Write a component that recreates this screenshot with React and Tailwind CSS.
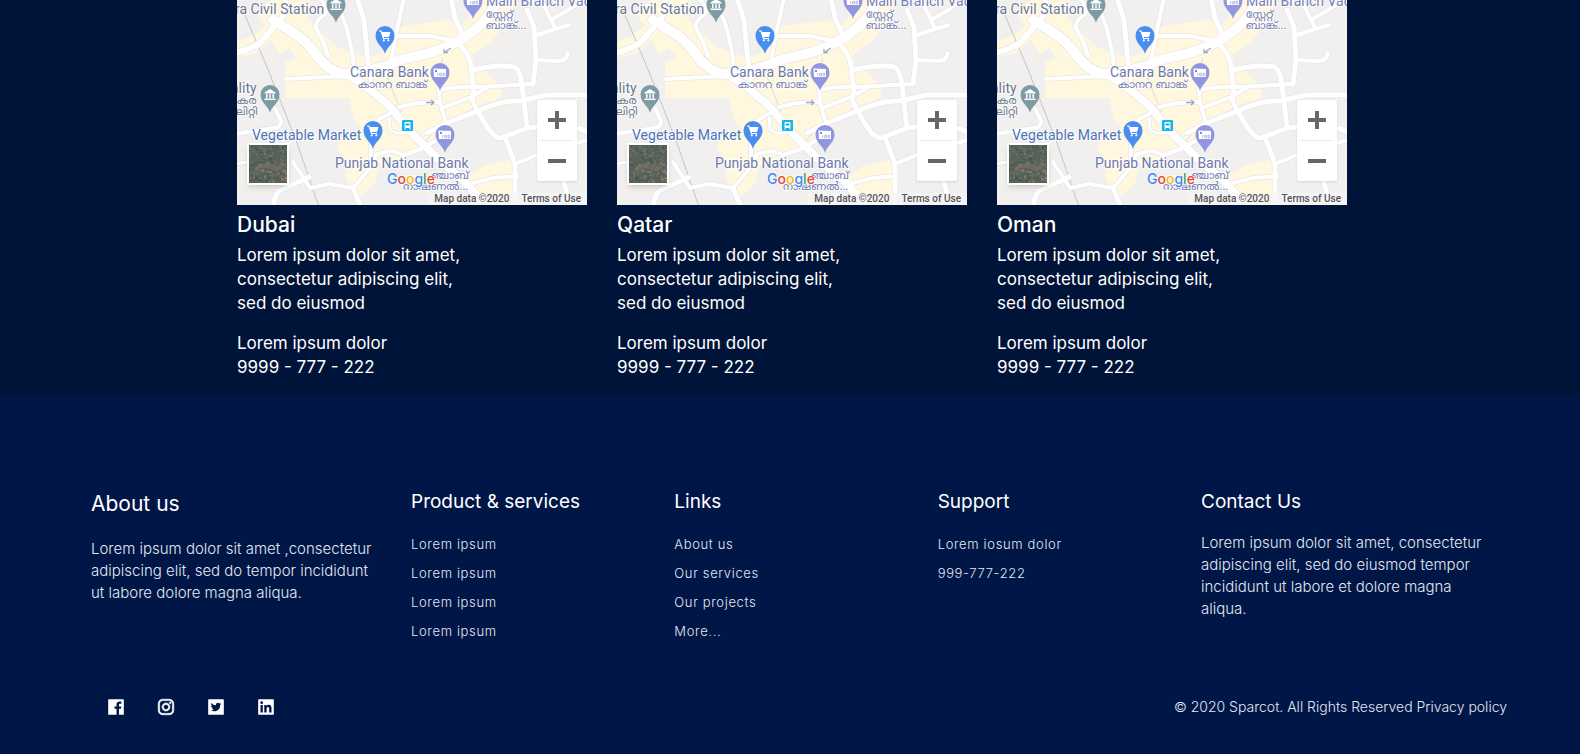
import React from "react";
import {
  AiFillFacebook,
  AiOutlineInstagram,
  AiFillTwitterSquare,
  AiFillLinkedin,
} from "react-icons/ai";

const ROADS = [
  ["M36 28 L23 43 Q12 50 -2 53", 6],
  ["M42 22 Q50 12 48 -2", 6],
  ["M49 79 L110 76", 4],
  ["M82 -2 Q92 8 88 14 Q77 22 79 28 L87 44 L91 56", 4],
  ["M97 -2 Q107 18 111 33 L115 52 L118 76", 4],
  ["M120 -2 L127 20 L131 62 L134 80", 5],
  ["M167 -2 L160 30 L153 66", 4],
  ["M157 36 L193 36 L223 42", 4],
  ["M214 -2 L218 18 L225 34", 5],
  ["M224 46 Q232 54 234 66 L237 92 Q233 98 238 106 L247 122 Q256 138 264 138 L290 128 Q320 124 344 129 L354 134", 5],
  ["M236 70 Q260 64 278 67 Q284 72 285 86 L290 127", 5],
  ["M290 10 L297 27 L299 60 L296 84", 5],
  ["M300 60 L322 61 Q329 61 331 53", 4],
  ["M300 35 L318 29 L332 25", 4],
  ["M318 28 L311 14 L305 2", 4],
  ["M314 20 L328 12 L350 -2", 4],
  ["M203 90 Q220 86 240 87 L296 84", 4],
  ["M205 108 L234 97 L250 88", 4],
  ["M190 133 L210 123 L243 110 Q266 100 282 101 L310 95 L352 95", 5],
  ["M162 107 L180 103 L203 102", 4],
  ["M202 88 L203 103 L208 120", 4],
  ["M156 112 Q142 118 134 126 L134 158", 4],
  ["M152 118 L153 130 Q164 137 174 129", 3],
  ["M268 137 L278 164 L278 207", 5],
  ["M280 163 L300 155 L354 139", 4],
  ["M326 178 L333 207", 5],
  ["M232 184 L256 178 L280 176", 4],
  ["M200 140 L184 149 L166 155 L156 151 L140 154 Q136 162 130 172 L116 188 L92 184 L73 188 L56 162", 4],
  ["M116 188 L124 207", 5],
  ["M72 177 L42 191 Q36 198 37 207", 5],
  ["M38 108 L44 121 Q44 127 38 128 L-2 134", 4],
  ["M-2 164 L10 162", 3],
];

const MAIN = [
  ["M36 20 L60 35 Q70 42 81 57 Q90 70 106 74 Q138 72 163 60 L196 52 Q222 44 240 28 Q252 18 262 -2", 10],
  ["M106 73 Q124 80 153 107 L173 131 L200 158 L228 182 L250 207", 8],
];

function Road({ d, w, color }) {
  return <path d={d} strokeWidth={w} stroke={color} fill="none" strokeLinecap="round" strokeLinejoin="round" />;
}

function Pin({ x, y, color, children }) {
  return (
    <g transform={`translate(${x} ${y})`}>
      <path d="M0 18 C-1.500 11 -9.500 8 -9.500 -.5 A9.500 9.500 0 0 1 9.500 -.5 C9.500 8 1.500 11 0 18Z" fill={color} />
      {children}
    </g>
  );
}

const Civic = () => (
  <g fill="#fff">
    <path d="M-5.500 -2.500 L0 -6 L5.500 -2.500 V-1.500 H-5.500Z" />
    <path d="M-4 -1 h1.500 v4 h-1.500z M-.75 -1 h1.500 v4 h-1.500z M2.500 -1 h1.500 v4 h-1.500z M-5.500 3.500 h11 v1.500 h-11z" />
  </g>
);

const Cart = () => (
  <g>
    <path d="M-3.500 -4 H5.500 L4 1 H-2.500Z" fill="#fff" />
    <path d="M-6 -5 H-4 L-1.500 2.500 H4" fill="none" stroke="#fff" strokeWidth="1.200" />
    <circle cx="-1.200" cy="4.300" r="1.100" fill="#fff" />
    <circle cx="3.300" cy="4.300" r="1.100" fill="#fff" />
  </g>
);

const Note = () => (
  <g>
    <path d="M-6.500 -4.500 L6 -4 V4 H-6Z" fill="#fff" />
    <path d="M-5 -3 h2 v2 h-2z" fill="#7b86cf" />
    <path d="M-2.300 0 v3 M-.3 .3 h1.700 v2.500 h-1.700z M3 .3 h1.700 v2.500 h-1.700z" stroke="#98a0dd" strokeWidth=".7" fill="none" />
  </g>
);

function StreetMap({ city }) {
  const halo = { stroke: "#fff", strokeOpacity: 0.8, strokeWidth: 2, paintOrder: "stroke", strokeLinejoin: "round" };
  return (
    <svg viewBox="0 0 350 205" className="block w-full" role="img" aria-label={`Map of the ${city} office`}>
      <rect width="350" height="205" fill="#f1f0ef" />
      <g fill="#fff7de">
        <path d="M-2 58 V42 L16 36 L28 26 L20 14 L26 6 L38 -2 H72 L66 14 L84 32 L98 46 L112 52 L130 58 L148 52 L156 34 L166 26 L210 20 L226 24 L238 10 L244 -2 H282 L270 22 L254 42 L236 54 L238 68 L250 72 L264 86 L264 98 L252 102 L238 106 L216 120 L200 142 L166 158 L142 166 L138 184 L122 198 L112 186 L108 176 L110 160 L100 150 L104 136 L124 128 L116 118 L112 98 L48 98 L48 62 L60 58 L52 48 L42 54 L34 40 L18 54Z" />
        <path d="M226 180 L246 166 L276 159 V205 H256Z" />
      </g>
      <path d="M5 8 L30 67 L60 143 L82 207" stroke="#c4c4c6" strokeWidth="1" fill="none" />
      <path d="M150 76 L164 112 M206 58 L204 66 M200 128 L188 142" stroke="#dedee0" strokeWidth="1" fill="none" />
      {ROADS.map(([d, w]) => <Road key={d} d={d} w={w + 1} color="#e0e0e4" />)}
      {MAIN.map(([d, w]) => <Road key={d} d={d} w={w + 1} color="#e0e0e4" />)}
      {ROADS.map(([d, w]) => <Road key={d} d={d} w={w} color="#fff" />)}
      {MAIN.map(([d, w]) => <Road key={d} d={d} w={w} color="#fff" />)}
      <path d="M214 48 L208 52 M207 49 v3.500 h4 M189 102.500 h8 M194 100 l3 2.500 l-3 2.500" stroke="#a3a7bd" strokeWidth="1.300" fill="none" />

      <g fontFamily="Roboto, sans-serif" fontSize="14" fontWeight="400" {...halo}>
        <text x="-2" y="14" fill="#6b7890">ra Civil Station</text>
        <text x="249" y="6" fill="#7680b4">Main Branch Vad</text>
        <text x="113" y="77" fill="#6d78ad">Canara Bank</text>
        <text x="-6" y="93" fill="#6b7890">ality</text>
        <text x="15" y="140" fill="#4d74b5">Vegetable Market</text>
        <text x="98" y="168" fill="#6d78ad">Punjab National Bank</text>
      </g>
      <g fontFamily="'Noto Sans Malayalam', 'Noto Sans', sans-serif" fontSize="11" fontWeight="400" {...halo}>
        <text x="249" y="18" fill="#7680b4">സ്റ്റേറ്റ്</text>
        <text x="249" y="29" fill="#7680b4">ബാങ്ക്...</text>
        <text x="121" y="88" fill="#7680b4">കാനറ ബാങ്ക്</text>
        <text x="0" y="104" fill="#6b7890">കര</text>
        <text x="-1" y="115" fill="#6b7890">ലിറ്റി</text>
        <text x="194" y="179" fill="#7680b4">ഞ്ചാബ്</text>
        <text x="166" y="190" fill="#7680b4">നാഷണൽ...</text>
      </g>

      <Pin x={99} y={5} color="#7f9ba5"><Civic /></Pin>
      <Pin x={33} y={95} color="#7f9ba5"><Civic /></Pin>
      <Pin x={148} y={36} color="#4a8df0"><Cart /></Pin>
      <Pin x={136} y={131} color="#4a8df0"><Cart /></Pin>
      <Pin x={236} y={1} color="#9097e0"><Note /></Pin>
      <Pin x={203} y={73} color="#9097e0"><Note /></Pin>
      <Pin x={208} y={135} color="#9097e0"><Note /></Pin>

      <rect x="165" y="120" width="11" height="11" rx="1" fill="#14b4ee" />
      <rect x="167.500" y="122" width="6" height="6" rx="1" fill="#fff" />
      <rect x="168.500" y="123.500" width="4" height="2" fill="#14b4ee" />
      <path d="M168 128 v1.500 M173 128 v1.500" stroke="#fff" />

      <text x="150" y="184" fontFamily="Inter, sans-serif" fontSize="14" fontWeight="500" stroke="#fff" strokeWidth="1" paintOrder="stroke">
        <tspan fill="#4285f4">G</tspan>
        <tspan fill="#ea4335">o</tspan>
        <tspan fill="#fbbc05">o</tspan>
        <tspan fill="#4285f4">g</tspan>
        <tspan fill="#34a853">l</tspan>
        <tspan fill="#ea4335">e</tspan>
      </text>
    </svg>
  );
}

function SatelliteThumb() {
  const specks = [];
  let seed = 7;
  const next = () => (seed = (seed * 16807) % 2147483647) / 2147483647;
  const colors = ["#4a6355", "#64746a", "#86746a", "#3d5547", "#8f7d73", "#55635b", "#6b5d56"];
  for (let i = 0; i < 320; i++) {
    specks.push(
      <rect key={i} x={next() * 38} y={next() * 38} width={1 + next() * 2} height={1 + next() * 2} fill={colors[Math.floor(next() * 7)]} opacity=".8" />
    );
  }
  return (
    <svg viewBox="0 0 38 38" className="block size-full" aria-hidden="true">
      <rect width="38" height="38" fill="#55625a" />
      {specks}
      <path d="M6 26 Q16 18 22 22 T34 18" stroke="#9a7d74" strokeWidth="5" opacity=".35" fill="none" />
    </svg>
  );
}

function MapView({ city }) {
  return (
    <div className="relative overflow-hidden">
      <StreetMap city={city} />
      <button aria-label="Show satellite imagery" className="absolute bottom-5 left-2.5 size-[42px] border-2 border-white shadow-md">
        <SatelliteThumb />
      </button>
      <div className="absolute right-2.5 bottom-6 w-10 rounded-xs bg-white shadow">
        <button aria-label="Zoom in" className="flex h-10 w-full items-center justify-center">
          <svg viewBox="0 0 18 18" className="size-[18px]" aria-hidden="true"><path d="M7 0h4v7h7v4h-7v7H7v-7H0V7h7z" fill="#666" /></svg>
        </button>
        <div className="mx-1 h-px bg-[#e6e6e6]" />
        <button aria-label="Zoom out" className="flex h-10 w-full items-center justify-center">
          <svg viewBox="0 0 18 18" className="size-[18px]" aria-hidden="true"><path d="M0 7h18v4H0z" fill="#666" /></svg>
        </button>
      </div>
      <div className="absolute right-0 bottom-0 flex gap-3 bg-[#f5f5f5]/80 px-1.5 font-[Roboto,sans-serif] text-[10px] leading-3 font-medium text-[#555]">
        <span>Map data ©2020</span>
        <a href="#terms">Terms of Use</a>
      </div>
    </div>
  );
}

function Office({ city }) {
  return (
    <article>
      <MapView city={city} />
      <h2 className="mt-2 mb-1.5 text-[21px] leading-6 font-medium">{city}</h2>
      <p className="mb-4 leading-6">
        Lorem ipsum dolor sit amet,<br />consectetur adipiscing elit,<br />sed do eiusmod
      </p>
      <p className="leading-6">
        Lorem ipsum dolor<br />9999 - 777 - 222
      </p>
    </article>
  );
}

function LinkColumn({ title, items }) {
  return (
    <nav className="col-span-2 pl-4" aria-label={title}>
      <h3 className="mb-5 text-[19px] leading-7">{title}</h3>
      <ul className="flex flex-col gap-3 text-[13px] leading-[17px] font-light tracking-wider text-[#e3e8f2]">
        {items.map((item, i) => (
          <li key={i}><a href="#">{item}</a></li>
        ))}
      </ul>
    </nav>
  );
}

const SOCIAL = [
  ["Facebook", AiFillFacebook, "size-5"],
  ["Instagram", AiOutlineInstagram, "size-5 stroke-white stroke-[32]"],
  ["Twitter", AiFillTwitterSquare, "size-5"],
  ["LinkedIn", AiFillLinkedin, "size-5"],
];

export default function App() {
  return (
    <div className="min-h-screen bg-[#001646] font-[Inter,sans-serif] text-white">
      <section className="bg-[#001338] pb-4 pl-1">
        <div className="mx-auto grid max-w-[1110px] grid-cols-3 gap-[30px] text-[17px]">
          <Office city="Dubai" />
          <Office city="Qatar" />
          <Office city="Oman" />
        </div>
      </section>

      <footer className="pt-[93px] pb-8">
        <div className="grid grid-cols-12">
          <section className="col-span-3 pl-[91px]">
            <h3 className="mt-0.5 mb-5 text-[21px] leading-7">About us</h3>
            <p className="text-[15px] leading-[22px] font-light text-[#e3e8f2]">
              Lorem ipsum dolor sit amet ,consectetur<br />adipiscing elit, sed do tempor incididunt<br />ut labore dolore magna aliqua.
            </p>
          </section>
          <LinkColumn title="Product & services" items={["Lorem ipsum", "Lorem ipsum", "Lorem ipsum", "Lorem ipsum"]} />
          <LinkColumn title="Links" items={["About us", "Our services", "Our projects", "More..."]} />
          <LinkColumn title="Support" items={["Lorem iosum dolor", "999-777-222"]} />
          <section className="col-span-3 pl-4">
            <h3 className="mb-4 text-[19px] leading-7">Contact Us</h3>
            <p className="text-[15px] leading-[22px] font-light text-[#e3e8f2]">
              Lorem ipsum dolor sit amet, consectetur<br />adipiscing elit, sed do eiusmod tempor<br />incididunt ut labore et dolore magna<br />aliqua.
            </p>
          </section>
        </div>

        <div className="mt-14 flex items-center justify-between pr-[73px] pl-[106px]">
          <ul className="flex gap-[30px]">
            {SOCIAL.map(([name, Icon, style]) => (
              <li key={name}><a href="#" aria-label={name}><Icon className={style} /></a></li>
            ))}
          </ul>
          <p className="text-sm leading-[22px] font-light text-[#e3e8f2]">
            © 2020 Sparcot. All Rights Reserved <a href="#privacy">Privacy policy</a>
          </p>
        </div>
      </footer>
    </div>
  );
}
